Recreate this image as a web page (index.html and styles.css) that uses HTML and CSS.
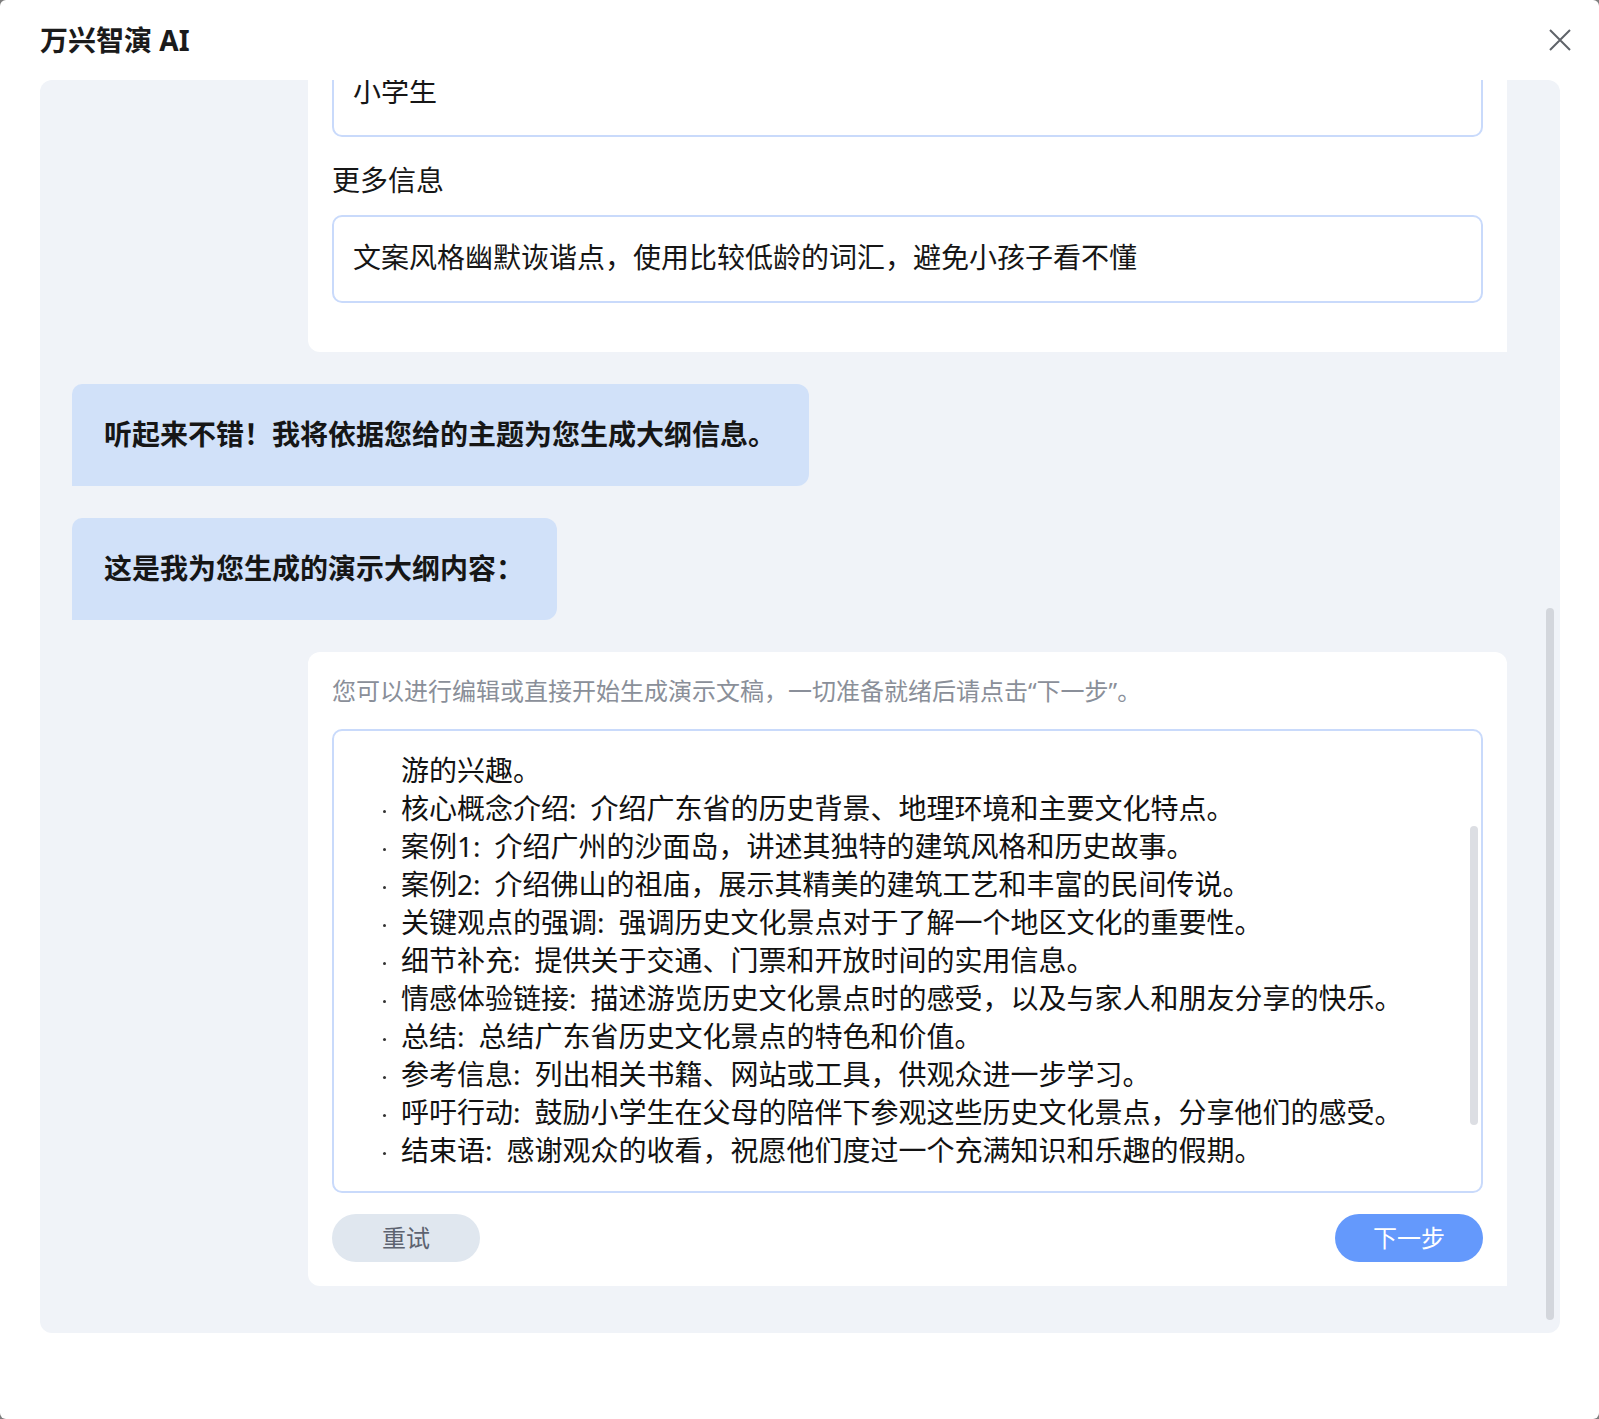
FILE: index.html
```html
<!DOCTYPE html>
<html lang="zh-CN">
<head>
    <meta charset="UTF-8">
    <meta name="viewport" content="width=device-width, initial-scale=1.0">
    <title>万兴智演 AI</title>
    <link rel="stylesheet" href="styles.css">
</head>
<body>
    <div class="dialog">
        <div class="header">
            <h1 class="title">万兴智演 AI</h1>
            <button class="close" aria-label="关闭">
                <svg width="22" height="22" viewBox="0 0 22 22">
                    <path d="M1 1L21 21M21 1L1 21" stroke="#5f6369" stroke-width="2" fill="none"/>
                </svg>
            </button>
        </div>

        <div class="panel">
            <div class="feed">
                <div class="card">
                    <div class="field-box">小学生</div>
                    <div class="field-label">更多信息</div>
                    <div class="field-box">文案风格幽默诙谐点，使用比较低龄的词汇，避免小孩子看不懂</div>
                </div>

                <div class="bubble">听起来不错！我将依据您给的主题为您生成大纲信息。</div>
                <div class="bubble">这是我为您生成的演示大纲内容：</div>

                <div class="card card-outline">
                    <p class="hint">您可以进行编辑或直接开始生成演示文稿，一切准备就绪后请点击“下一步”。</p>
                    <div class="outline">
                        <ul class="outline-list">
                            <li class="cont">游的兴趣。</li>
                            <li>核心概念介绍:&ensp;介绍广东省的历史背景、地理环境和主要文化特点。</li>
                            <li>案例1:&ensp;介绍广州的沙面岛，讲述其独特的建筑风格和历史故事。</li>
                            <li>案例2:&ensp;介绍佛山的祖庙，展示其精美的建筑工艺和丰富的民间传说。</li>
                            <li>关键观点的强调:&ensp;强调历史文化景点对于了解一个地区文化的重要性。</li>
                            <li>细节补充:&ensp;提供关于交通、门票和开放时间的实用信息。</li>
                            <li>情感体验链接:&ensp;描述游览历史文化景点时的感受，以及与家人和朋友分享的快乐。</li>
                            <li>总结:&ensp;总结广东省历史文化景点的特色和价值。</li>
                            <li>参考信息:&ensp;列出相关书籍、网站或工具，供观众进一步学习。</li>
                            <li>呼吁行动:&ensp;鼓励小学生在父母的陪伴下参观这些历史文化景点，分享他们的感受。</li>
                            <li>结束语:&ensp;感谢观众的收看，祝愿他们度过一个充满知识和乐趣的假期。</li>
                        </ul>
                        <div class="inner-scroll"></div>
                    </div>
                    <div class="actions">
                        <button class="btn btn-retry">重试</button>
                        <button class="btn btn-next">下一步</button>
                    </div>
                </div>
            </div>
            <div class="panel-scroll"></div>
        </div>
    </div>
</body>
</html>
```

FILE: styles.css
```css
html {
    background: #7d7d7d;
}
body {
    margin: 0;
    padding: 0;
    font-family: "Noto Sans", "Noto Sans CJK SC", sans-serif;
    color: #1a1a1a;
}
.dialog {
    width: 1599px;
    height: 1419px;
    background: #fff;
    border-radius: 6px;
    overflow: hidden;
}
.header {
    height: 80px;
    padding: 0 28px 0 40px;
    display: flex;
    align-items: center;
    justify-content: space-between;
}
.title {
    margin: 0;
    font-size: 28px;
    font-weight: 700;
    line-height: 36px;
    color: #1b1b1b;
}
.close {
    width: 22px;
    height: 22px;
    padding: 0;
    border: none;
    background: none;
    display: flex;
}
.panel {
    position: relative;
    margin: 0 39px 0 40px;
    height: 1253px;
    background: #f0f3f8;
    border-radius: 12px;
    overflow: hidden;
    padding: 0 53px 0 32px;
}
.feed {
    margin-top: -55px;
    display: flex;
    flex-direction: column;
    gap: 32px;
}
.card {
    margin-left: 236px;
    background: #fff;
    border-radius: 12px 12px 0 12px;
    padding: 24px 24px 49px;
}
.field-box {
    height: 88px;
    box-sizing: border-box;
    border: 2px solid #c9dafb;
    border-radius: 10px;
    padding: 0 19px 5px;
    display: flex;
    align-items: center;
    font-size: 28px;
    line-height: 16px;
    color: #161616;
}
.field-label {
    margin: 24px 0 16px;
    font-size: 28px;
    line-height: 38px;
    color: #161616;
}
.bubble {
    align-self: flex-start;
    background: #d1e1f9;
    border-radius: 10px 12px 12px 0;
    padding: 31px 33px 33px 32px;
    font-size: 28px;
    font-weight: 700;
    line-height: 38px;
    color: #161616;
}
.card-outline {
    padding: 22px 24px 24px;
}
.hint {
    margin: 0 0 21px;
    font-size: 24px;
    line-height: 34px;
    color: #8a8f99;
}
.outline {
    position: relative;
    height: 464px;
    box-sizing: border-box;
    border: 2px solid #c9dafb;
    border-radius: 10px;
    overflow: hidden;
}
.outline-list {
    list-style: none;
    margin: 0;
    padding: 20px 0 0;
}
.outline-list li {
    display: flex;
    font-size: 28px;
    line-height: 38px;
    white-space: nowrap;
    color: #121212;
}
.outline-list li::before {
    content: "";
    flex: none;
    width: 3px;
    height: 3px;
    border-radius: 50%;
    background: #333;
    align-self: center;
    margin: 6px 15px 0 49px;
}
.outline-list li.cont::before {
    visibility: hidden;
}
.inner-scroll {
    position: absolute;
    top: 95px;
    right: 3px;
    width: 8px;
    height: 299px;
    border-radius: 4px;
    background: #dcdee3;
}
.actions {
    margin-top: 21px;
    display: flex;
    justify-content: space-between;
}
.btn {
    width: 148px;
    height: 48px;
    padding: 0 0 4px;
    border: none;
    border-radius: 24px;
    font-family: "Noto Sans CJK SC", sans-serif;
    font-size: 24px;
    cursor: pointer;
}
.btn-retry {
    background: #e0e7ef;
    color: #5d6370;
}
.btn-next {
    background: #6499fc;
    color: #fff;
}
.panel-scroll {
    position: absolute;
    top: 528px;
    right: 6px;
    width: 8px;
    height: 712px;
    border-radius: 4px;
    background: #d3d6dc;
}
```
